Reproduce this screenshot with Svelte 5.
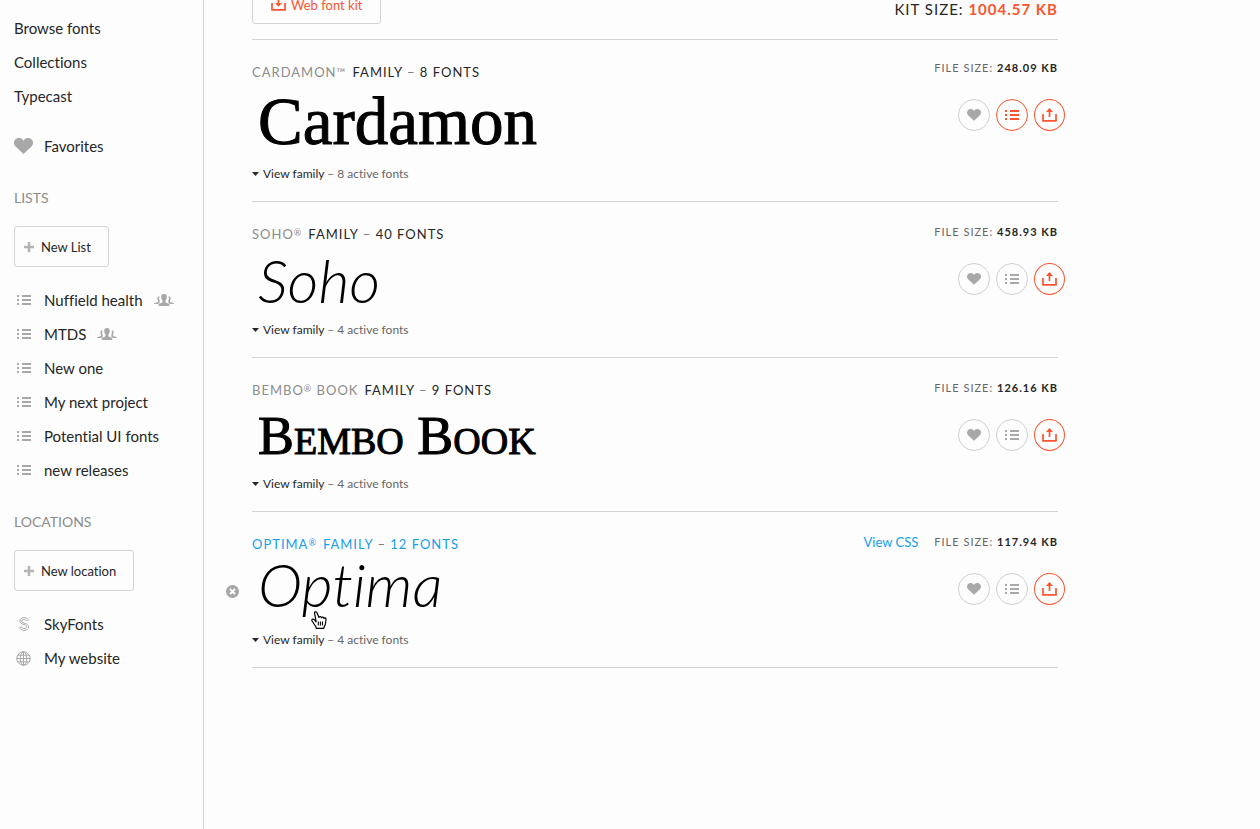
<script>
  const lists = [
    { name: 'Nuffield health', shared: true },
    { name: 'MTDS', shared: true },
    { name: 'New one', shared: false },
    { name: 'My next project', shared: false },
    { name: 'Potential UI fonts', shared: false },
    { name: 'new releases', shared: false }
  ];

  const families = [
    { id: 'cardamon', name: 'CARDAMON', mark: '™', rest: '', sample: 'Cardamon', fonts: 8, active: 8, size: '248.09 KB', listed: true, hovered: false },
    { id: 'soho', name: 'SOHO', mark: '®', rest: '', sample: 'Soho', fonts: 40, active: 4, size: '458.93 KB', listed: false, hovered: false },
    { id: 'bembo', name: 'BEMBO', mark: '®', rest: ' BOOK', sample: 'Bembo Book', fonts: 9, active: 4, size: '126.16 KB', listed: false, hovered: false },
    { id: 'optima', name: 'OPTIMA', mark: '®', rest: '', sample: 'Optima', fonts: 12, active: 4, size: '117.94 KB', listed: false, hovered: true }
  ];
</script>

{#snippet heart(w)}
  <svg width={w} viewBox="0 0 19 16" aria-hidden="true">
    <path fill="currentColor" d="M9.5 16 1.5 8.4C-.4 6.500-.5 3.500 1.200 1.600 3.200-.5 6.500-.5 8.500 1.500l1 1.100 1-1.100c2-2 5.300-2 7.300.1 1.700 1.900 1.600 4.900-.3 6.800z" />
  </svg>
{/snippet}

{#snippet listIcon()}
  <svg width="14" height="10" viewBox="0 0 14 10" aria-hidden="true">
    <path fill="currentColor" d="M0 0h2v2H0zM5 0h9v2H5zM0 4h2v2H0zM5 4h9v2H5zM0 8h2v2H0zM5 8h9v2H5z" />
  </svg>
{/snippet}

{#snippet plus()}
  <svg width="10" height="10" viewBox="0 0 10 10" aria-hidden="true">
    <path fill="none" stroke="currentColor" stroke-width="2.600" d="M5 0v10M0 5h10" />
  </svg>
{/snippet}

{#snippet people()}
  <svg class="people" width="20" height="12" viewBox="0 0 20 12" aria-hidden="true">
    <path fill="currentColor" d="M10 0c2 0 2.900 1.200 2.800 3.200-.1 1.500-.6 2.500-1.300 3.200v1.800c.6.900 3.300.8 3.800 2.100V12H4.700v-1.700C5.200 9 7.900 9.100 8.500 8.200V6.400C7.800 5.700 7.300 4.700 7.200 3.200 7.100 1.200 8 0 10 0z" />
    <path fill="currentColor" d="M5.300 2.200c-1.300-.1-2 .8-1.900 2.200 0 .9.200 1.600.6 2.100v1.200C3.500 8.600.3 8.200 0 10h4.200c.3-.7.900-1 1.500-1.300V6.500l-.6-1zM14.700 2.200c1.300-.1 2 .8 1.900 2.200 0 .9-.2 1.600-.6 2.100v1.200c.5.900 3.700.5 4 2.300h-4.200c-.3-.7-.9-1-1.500-1.300V6.500l.6-1z" />
  </svg>
{/snippet}

{#snippet tray(down)}
  <svg width="15" height="14" viewBox="0 0 15 14" aria-hidden="true">
    <path fill="none" stroke="currentColor" stroke-width="1.700" d="M1 6v6.900h13V6" />
    {#if down}
      <path fill="none" stroke="currentColor" stroke-width="1.700" d="M7.500 1v7" />
      <path fill="currentColor" d="M4 6h7L7.500 9.800z" />
    {:else}
      <path fill="none" stroke="currentColor" stroke-width="1.700" d="M7.500 9V1" />
      <path fill="currentColor" d="M4 3.900h7L7.500 0z" />
    {/if}
  </svg>
{/snippet}

<div class="page">
  <nav class="sidebar" aria-label="Library">
    <ul>
      <li><a href="#browse">Browse fonts</a></li>
      <li><a href="#collections">Collections</a></li>
      <li><a href="#typecast">Typecast</a></li>
    </ul>
    <ul class="favorites">
      <li><a href="#favorites"><span class="icon">{@render heart(19)}</span>Favorites</a></li>
    </ul>

    <h2>LISTS</h2>
    <button class="box add">{@render plus()}New List</button>
    <ul>
      {#each lists as list}
        <li>
          <a href="#list"><span class="icon">{@render listIcon()}</span>{list.name}{#if list.shared}{@render people()}{/if}</a>
        </li>
      {/each}
    </ul>

    <h2>LOCATIONS</h2>
    <button class="box add">{@render plus()}New location</button>
    <ul>
      <li>
        <a href="#skyfonts">
          <span class="icon">
            <svg width="12" height="14" viewBox="0 0 12 14" aria-hidden="true">
              <path fill="none" stroke="currentColor" stroke-width="1" stroke-linecap="round" d="M10.300 3.600C10 1.700 8.400.6 6.200.6 3.600.6 1.900 2 1.900 4c0 4.500 6.600 2.200 6.600 5.800 0 1.100-.9 1.700-2.400 1.700S3.800 10.900 3.700 9.800M8.300 3.900C8 2.900 7.300 2.400 6.200 2.400c-1.500 0-2.400.6-2.400 1.600 0 3.200 6.700 1.500 6.700 5.900 0 2.100-1.800 3.500-4.400 3.500S1.800 12 1.800 10" />
            </svg>
          </span>SkyFonts
        </a>
      </li>
      <li>
        <a href="#website">
          <span class="icon">
            <svg width="15" height="15" viewBox="0 0 15 15" aria-hidden="true">
              <g fill="none" stroke="currentColor">
                <circle cx="7.500" cy="7.500" r="6.700" />
                <ellipse cx="7.500" cy="7.500" rx="3.300" ry="6.700" />
                <path d="M7.500.5v14M.5 7.500h14M1.800 4.200h11.400M1.800 10.800h11.400" />
              </g>
            </svg>
          </span>My website
        </a>
      </li>
    </ul>
  </nav>

  <main>
    <header class="toolbar">
      <button class="box kit">{@render tray(true)}Web font kit</button>
      <p class="kit-size">KIT SIZE: <strong>1004.57 KB</strong></p>
    </header>

    {#each families as family}
      <article class="family {family.id}" class:hovered={family.hovered}>
        <div class="info">
          <h3><span class="name">{family.name}<small>{family.mark}</small>{family.rest}</span><span>FAMILY <i>–</i> {family.fonts} FONTS</span></h3>
          <p class="sample">{family.sample}</p>
          <button class="view">
            <svg width="7" height="4" viewBox="0 0 7 4" aria-hidden="true"><path fill="currentColor" d="M0 0h7L3.500 4z" /></svg>
            <span>View family <em>– {family.active} active fonts</em></span>
          </button>
        </div>
        <div class="side">
          <p class="size">
            {#if family.hovered}<a href="#css">View CSS</a>{/if}
            <span>FILE SIZE: <strong>{family.size}</strong></span>
          </p>
          <div class="actions">
            <button class="round" aria-label="Favorite {family.sample}">{@render heart(14)}</button>
            <button class="round" class:on={family.listed} aria-label="Add {family.sample} to list">{@render listIcon()}</button>
            <button class="round on" aria-label="Publish {family.sample}">{@render tray(false)}</button>
          </div>
        </div>
        {#if family.hovered}
          <button class="remove" aria-label="Remove {family.sample}">
            <svg width="13" height="13" viewBox="0 0 13 13" aria-hidden="true">
              <circle cx="6.500" cy="6.500" r="6.500" fill="#a6a6a6" />
              <path stroke="#fff" stroke-width="2" d="m4 4 5 5M9 4 4 9" />
            </svg>
          </button>
          <svg class="pointer" width="16" height="18" viewBox="0 0 16 18" aria-hidden="true">
            <path fill="#fff" stroke="#000" stroke-width="1.200" stroke-linejoin="round" d="M5.200 10.800 3.200 8.700C2.300 7.800 1 8 .8 9c-.1.700.4 1.200.8 1.700l2.300 3.600c.5.900 1.300 1.400 1.300 3h7.600c0-1.600 1.500-2.700 1.700-4.800l.5-4.200c.1-1.500-1.700-1.900-2.100-.7.100-1.600-1.900-2-2.400-.6 0-1.600-2-2-2.500-.6L5.900 1.600C5.300.2 3.200.7 3.600 2.300z" />
            <path fill="none" stroke="#000" stroke-width="1.100" d="M7.300 10.500v4M9.400 10.500v4M11.500 10.500v4" />
          </svg>
        {/if}
      </article>
    {/each}
  </main>
</div>

<style>
  :global(body) {
    background: #fdfdfd;
  }

  .page {
    display: flex;
    min-height: 100vh;
    overflow: hidden;
    font-family: Lato, 'Open Sans', sans-serif;
    font-size: 15px;
    font-variant-ligatures: none;
    line-height: 20px;
    color: #262626;
  }

  ul, h2, h3, p {
    margin: 0;
    padding: 0;
    list-style: none;
    font-weight: 400;
  }

  a {
    color: inherit;
    text-decoration: none;
  }

  button {
    padding: 0;
    border: 0;
    background: none;
    color: inherit;
    font: inherit;
    cursor: pointer;
  }

  svg {
    display: block;
    flex: none;
  }

  .sidebar {
    box-sizing: border-box;
    flex: none;
    width: 204px;
    padding: 11px 14px;
    border-right: 1px solid #d4d4d4;
  }

  .sidebar a {
    display: flex;
    align-items: center;
    height: 34px;
    white-space: nowrap;
  }

  .favorites {
    margin-top: 16px;
  }

  .icon {
    display: flex;
    justify-content: center;
    width: 19px;
    margin-right: 11px;
    color: #a8a8a8;
  }

  .people {
    margin-left: 11px;
    color: #a8a8a8;
  }

  h2 {
    margin-top: 25px;
    font-size: 14px;
    color: #8c8c8c;
  }

  .box {
    display: flex;
    align-items: center;
    box-sizing: border-box;
    height: 41px;
    border: 1px solid #d4d4d4;
    border-radius: 3px;
  }

  .add {
    gap: 7px;
    margin: 18px 0 16px;
    padding: 0 17px 0 9px;
    font-size: 13px;
  }

  .add svg {
    color: #b4b4b4;
  }

  main {
    flex: 1;
    min-width: 0;
    margin-top: -17px;
    padding: 0 202px 0 48px;
  }

  .toolbar {
    display: flex;
    justify-content: space-between;
    padding-bottom: 15px;
    border-bottom: 1px solid #d4d4d4;
  }

  .kit {
    gap: 5px;
    padding: 3px 18px 0;
    font-size: 13px;
    color: #fa5530;
  }

  .kit svg {
    margin-bottom: 3px;
  }

  .kit-size {
    padding-top: 16px;
    letter-spacing: 1px;
  }

  .kit-size strong {
    color: #fa5530;
  }

  .family {
    position: relative;
    display: flex;
    justify-content: space-between;
    padding: 22px 0 17px;
    border-bottom: 1px solid #d4d4d4;
  }

  h3 {
    display: flex;
    gap: 6px;
    font-size: 13px;
    letter-spacing: 1px;
  }

  h3 i {
    font-style: normal;
    color: #777;
  }

  h3 small {
    font-size: 9px;
    line-height: 10px;
    vertical-align: 3px;
  }

  .cardamon small {
    font-size: 12px;
    vertical-align: baseline;
  }

  .name {
    color: #8c8c8c;
    white-space: pre;
  }

  .hovered h3,
  .hovered .name,
  .size a {
    color: #149ee8;
  }

  .sample {
    height: 76px;
    padding-left: 6px;
    font-size: 60px;
    line-height: 72px;
    white-space: nowrap;
    color: #000;
  }

  .cardamon .sample {
    height: 82px;
    font: 67px/78px 'Liberation Serif', serif;
    -webkit-text-stroke: 1px #000;
  }

  .bembo .sample {
    height: 74px;
    font: 54px/73px 'Liberation Serif', serif;
    font-variant: small-caps;
    -webkit-text-stroke: 1px #000;
  }

  .soho .sample,
  .optima .sample {
    font-style: italic;
    font-weight: 300;
  }

  .optima .sample {
    line-height: 60px;
  }

  .view {
    display: flex;
    align-items: center;
    gap: 4px;
    font-size: 12px;
  }

  .view em {
    font-style: normal;
    color: #666;
  }

  .side {
    display: flex;
    flex-direction: column;
    align-items: flex-end;
    margin-top: -2px;
  }

  .cardamon .side {
    margin-top: -4px;
  }

  .size {
    display: flex;
    gap: 16px;
    font-size: 11px;
    color: #666;
  }

  .size a {
    font-size: 13px;
  }

  .size span {
    letter-spacing: 1px;
  }

  .size strong {
    color: #262626;
  }

  .actions {
    display: flex;
    gap: 6px;
    margin: 21px -7px 0 0;
  }

  .round {
    display: grid;
    place-items: center;
    box-sizing: border-box;
    width: 32px;
    height: 32px;
    border: 1px solid #d0d0d0;
    border-radius: 50%;
    color: #a8a8a8;
  }

  .round:last-child {
    width: 31px;
  }

  .round.on {
    border-color: #fa5530;
    color: #fa5530;
  }

  .remove {
    position: absolute;
    top: 73px;
    left: -26px;
  }

  .pointer {
    position: absolute;
    top: 99px;
    left: 59px;
  }
</style>
